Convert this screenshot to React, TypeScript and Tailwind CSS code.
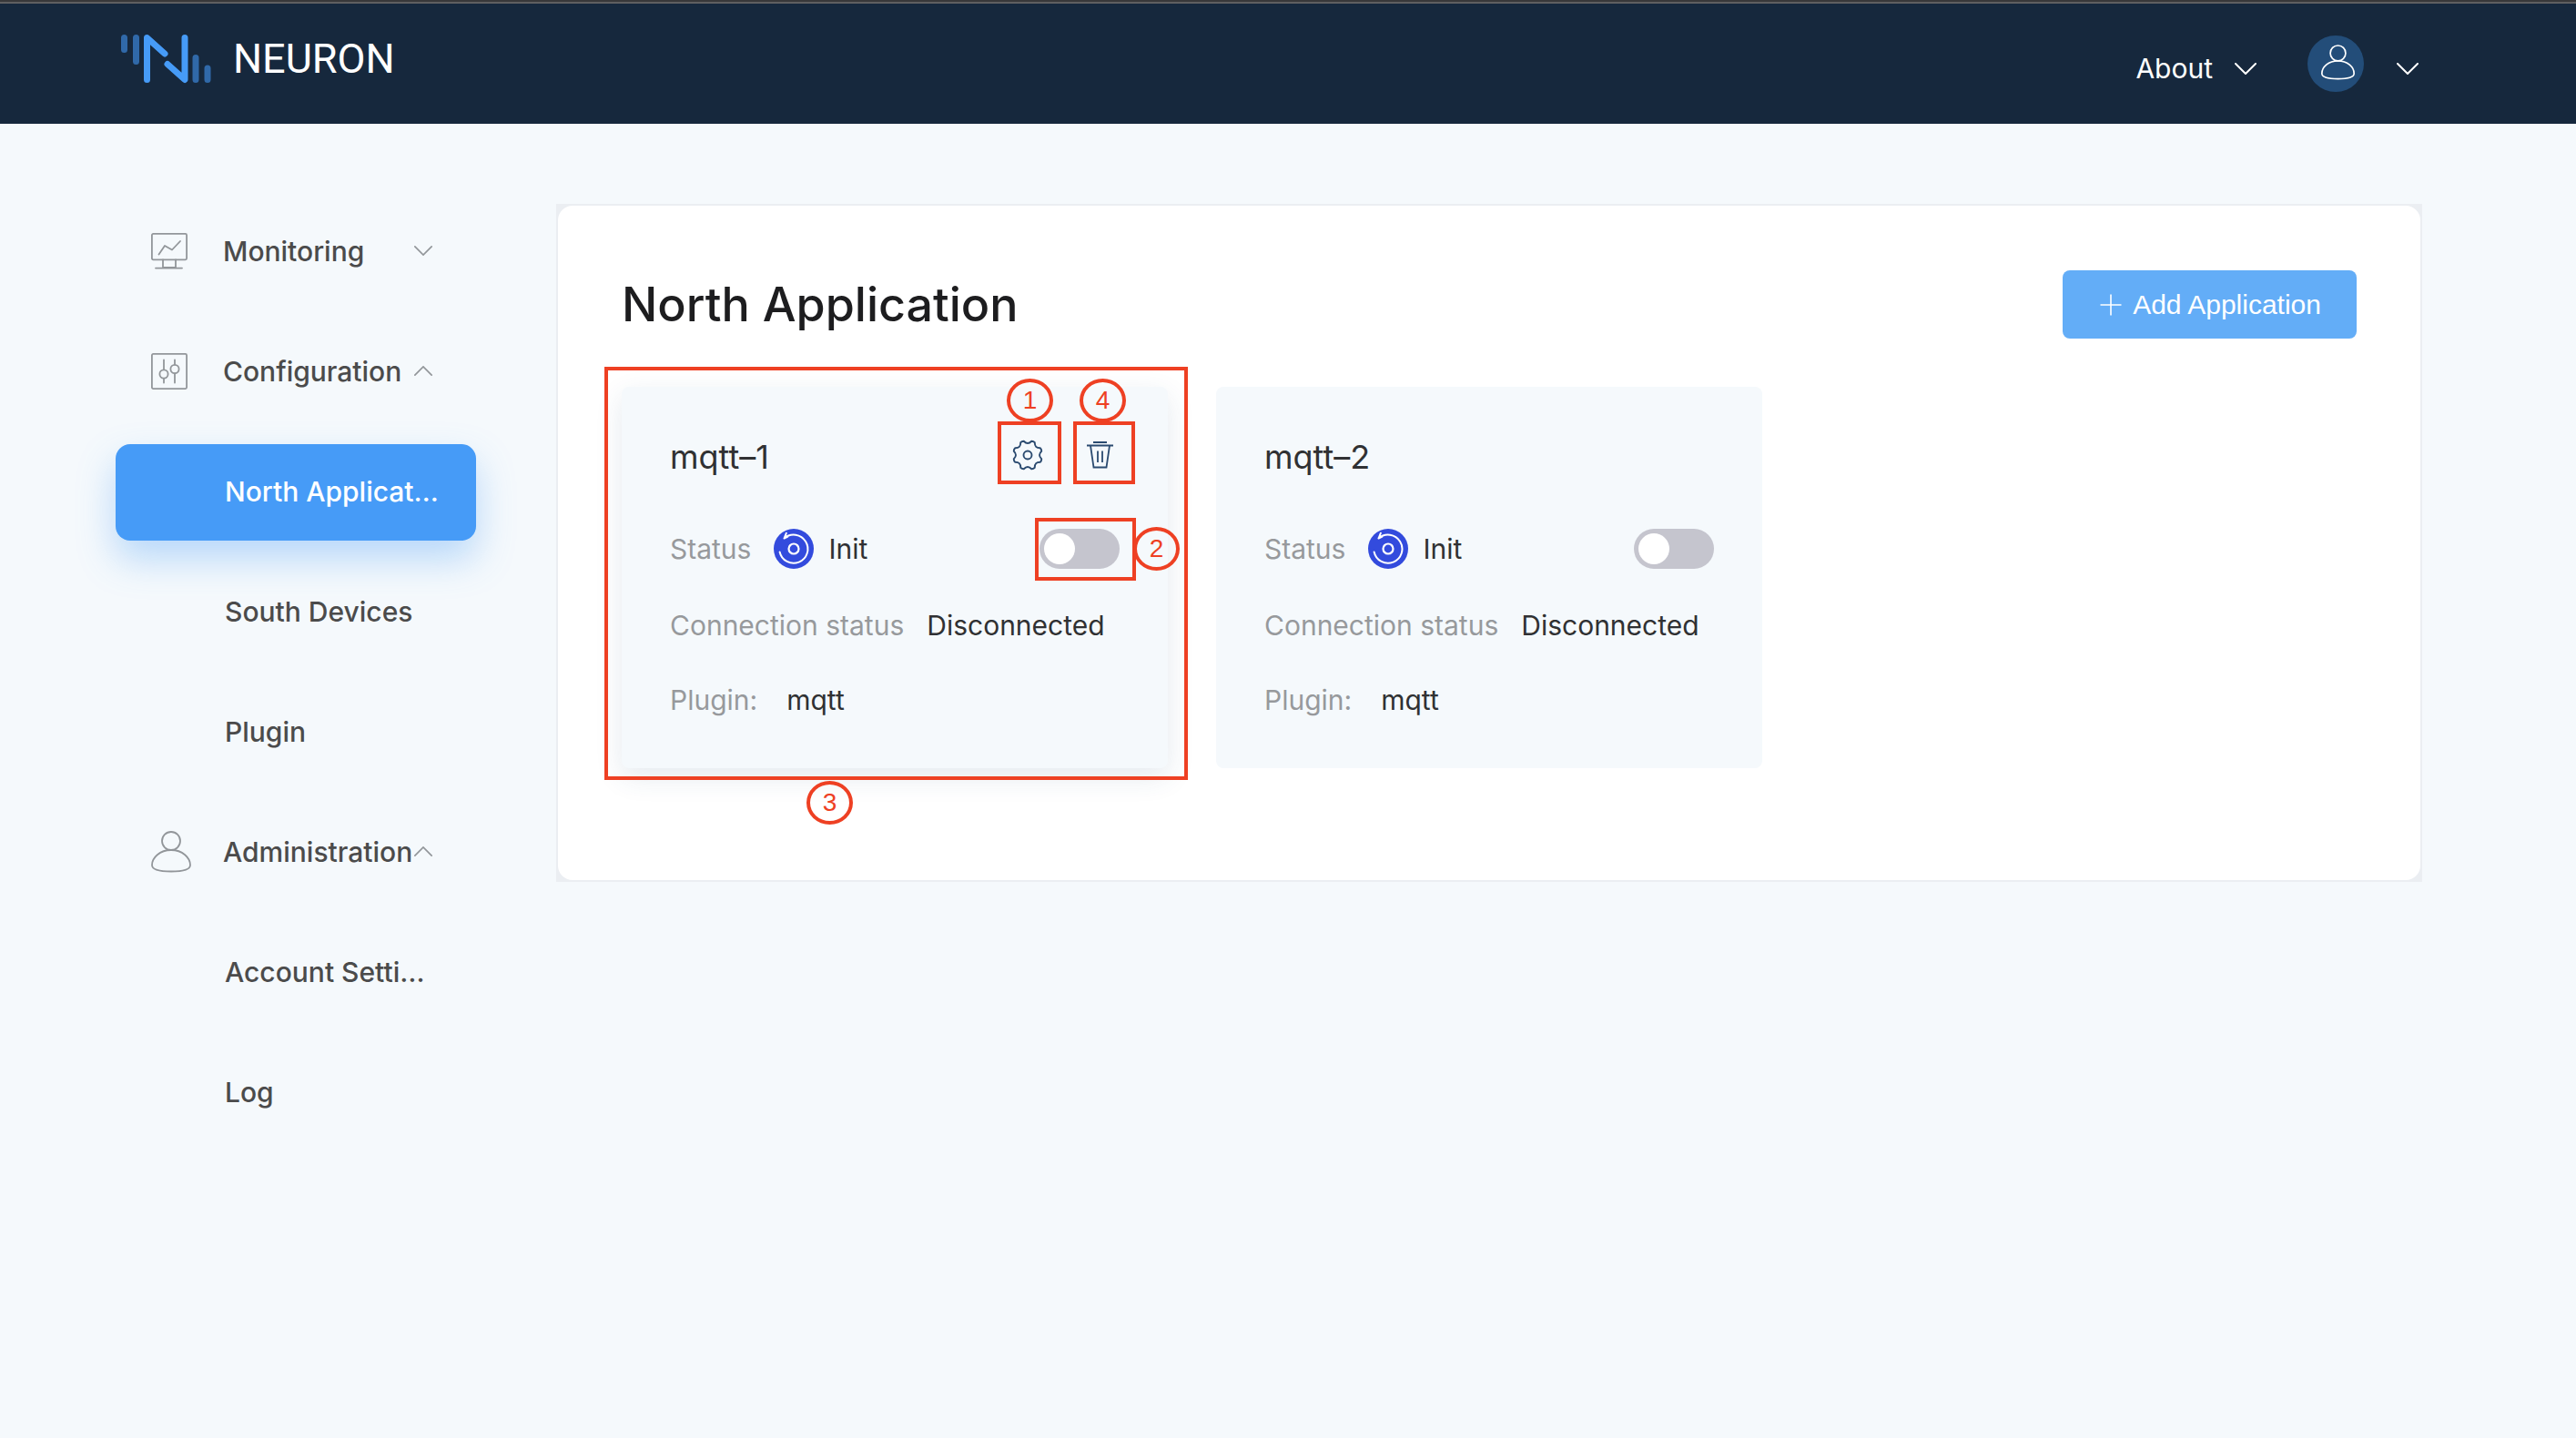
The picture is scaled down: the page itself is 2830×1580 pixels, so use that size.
import type { ReactNode } from "react";

function Logo() {
  return (
    <svg width="99" height="54" viewBox="0 0 99 54" fill="none" strokeWidth="7" strokeLinecap="round" strokeLinejoin="round" aria-hidden="true">
      <path stroke="#3069a9" d="M3.5 3.5V16.5M16.5 3.5V29.5M82 25.5V49.5M95 37V49.5" />
      <path stroke="#469bf7" d="M28.5 49.5V3.5L48 21M51 32.5L70 49.5V3.5" />
    </svg>
  );
}

function Person({ className, stroke }: { className: string; stroke: number }) {
  return (
    <svg className={className} viewBox="0 0 44 46" fill="none" stroke="currentColor" strokeWidth={stroke} aria-hidden="true">
      <circle cx="22" cy="11" r="10" />
      <path d="M22 21C9.5 21 1 29.5 1 37.5C1 42.5 8 44.5 22 44.5C36 44.5 43 42.5 43 37.5C43 29.5 34.5 21 22 21Z" />
    </svg>
  );
}

function Chevron({ className, up = false }: { className: string; up?: boolean }) {
  return (
    <svg className={className} viewBox="0 0 24 13" fill="none" stroke="currentColor" strokeWidth="2" strokeLinecap="round" aria-hidden="true">
      <path d={up ? "M1 12L12 1L23 12" : "M1 1L12 12L23 1"} />
    </svg>
  );
}

function MonitorIcon() {
  return (
    <svg width="40" height="40" viewBox="0 0 40 40" fill="none" stroke="currentColor" strokeWidth="1.8" strokeLinecap="round" strokeLinejoin="round" aria-hidden="true">
      <rect x="0.9" y="0.9" width="38.2" height="28.4" rx="1.5" />
      <path d="M8.5 23.5L15 14L23 18.5L32 9M13 29.3V38H27V29.3M5 38.6H34" />
    </svg>
  );
}

function SlidersIcon() {
  return (
    <svg width="40" height="40" viewBox="0 0 40 40" fill="none" stroke="currentColor" strokeWidth="1.8" strokeLinecap="round" aria-hidden="true">
      <rect x="0.9" y="0.9" width="38.2" height="38.2" rx="1.5" />
      <circle cx="14" cy="23" r="4.6" />
      <circle cx="26" cy="17.5" r="4.6" />
      <path d="M14 7.5V18M14 28V32.5M26 7.5V12.5M26 22.5V32.5" />
    </svg>
  );
}

function gearOutline() {
  const at = (deg: number, r: number) => {
    const a = (deg * Math.PI) / 180;
    return `${(17 + r * Math.cos(a)).toFixed(2)} ${(17 + r * Math.sin(a)).toFixed(2)}`;
  };
  let d = `M${at(15.5, 15.8)}`;
  for (let i = 0; i < 8; i++) {
    const tooth = 22.5 + i * 45;
    d += `Q${at(tooth, 16.6)} ${at(tooth + 7, 15.8)}Q${at(tooth + 22.5, 10.8)} ${at(tooth + 38, 15.8)}`;
  }
  return d + "Z";
}

const GEAR = gearOutline();

function GearIcon() {
  return (
    <svg width="34" height="34" viewBox="0 0 34 34" fill="none" stroke="currentColor" strokeWidth="1.9" strokeLinejoin="round" aria-hidden="true">
      <path d={GEAR} />
      <circle cx="17" cy="17" r="4.5" />
    </svg>
  );
}

function TrashIcon() {
  return (
    <svg width="29" height="30" viewBox="0 0 29 30" fill="none" stroke="currentColor" strokeWidth="1.8" aria-hidden="true">
      <path d="M7 1H22M0 4.5H29M4 4.5L7.5 28.5H21.5L25 4.5M12 10.5V23M17 10.5V23" />
    </svg>
  );
}

function InitIcon() {
  return (
    <svg width="44" height="44" viewBox="0 0 44 44" fill="none" stroke="#fff" strokeWidth="2" strokeLinecap="round" strokeLinejoin="round" aria-hidden="true">
      <circle cx="22" cy="22" r="22" fill="#334bdd" stroke="none" />
      <circle cx="22" cy="22" r="5.5" strokeWidth="2.2" />
      <path d="M13.8 4.8L11.5 10.5A15.6 15.6 0 1 1 6.6 25.5M11.5 10.5L15.5 8.5" />
    </svg>
  );
}

function NavGroup({ icon, label, open }: { icon: ReactNode; label: string; open: boolean }) {
  return (
    <button type="button" aria-expanded={open} className="flex h-[106px] w-full items-center pb-[3px] pl-[39px] text-left text-[#4b4b4b]">
      <span className="w-[79px] shrink-0 text-[#92969a]">{icon}</span>
      <span className="w-[210px] shrink-0 whitespace-nowrap">{label}</span>
      <Chevron up={open} className="h-[11px] w-5 shrink-0 text-[#92969a]" />
    </button>
  );
}

function NavItem({ label, active = false }: { label: string; active?: boolean }) {
  return (
    <a
      href="#"
      aria-current={active ? "page" : undefined}
      className={
        active
          ? "flex h-[106px] items-center rounded-2xl bg-[#469bf7] pb-[3px] pl-[120px] whitespace-nowrap text-white shadow-[0_20px_40px_rgba(70,155,247,0.35)]"
          : "flex h-[106px] items-center pb-[3px] pl-[120px] whitespace-nowrap text-[#4b4b4b]"
      }
    >
      {label}
    </a>
  );
}

function Marker({ className, children }: { className: string; children: ReactNode }) {
  return (
    <span className={`absolute flex items-center justify-center rounded-[50%] border-4 border-[#ee4023] font-['Liberation_Sans',sans-serif] text-[28px] leading-none text-[#ee4023] ${className}`}>
      {children}
    </span>
  );
}

function Callouts() {
  const box = "absolute border-4 border-[#ee4023]";
  return (
    <div className="pointer-events-none absolute inset-0">
      <div className={`${box} -top-[22px] -right-[22px] -bottom-[13px] -left-[19px]`} />
      <div className={`${box} top-[38px] right-[117px] h-[69px] w-[70px]`} />
      <div className={`${box} top-[38px] right-9 h-[69px] w-[68px]`} />
      <div className={`${box} top-36 right-[35px] h-[69px] w-[111px]`} />
      <Marker className="-top-[9px] right-[126px] h-12 w-[51px]">1</Marker>
      <Marker className="-top-[9px] right-[46px] h-12 w-[51px]">4</Marker>
      <Marker className="top-[154px] -right-[13px] h-12 w-[51px]">2</Marker>
      <Marker className="top-[433px] left-[203px] h-12 w-[51px]">3</Marker>
    </div>
  );
}

function AppCard({ name, highlighted = false }: { name: string; highlighted?: boolean }) {
  return (
    <article
      className={
        highlighted
          ? "relative rounded-lg bg-[#f5f9fc] px-[53px] pt-[53px] pb-[55px] shadow-[0_10px_30px_rgba(40,80,120,0.12)]"
          : "relative rounded-lg bg-[#f5f9fc] px-[53px] pt-[53px] pb-[55px]"
      }
    >
      <div className="flex h-12 items-center justify-between">
        <h2 className="text-4xl text-[#303133]">{name}</h2>
        {highlighted && (
          <div className="mr-[7px] mb-1 flex items-center gap-12 text-[#2b4b70]">
            <button type="button" aria-label="Configure">
              <GearIcon />
            </button>
            <button type="button" aria-label="Delete">
              <TrashIcon />
            </button>
          </div>
        )}
      </div>
      <div className="mt-[55px] flex h-11 items-center">
        <span className="text-[#97999c]">Status</span>
        <span className="mr-4 ml-[25px]">
          <InitIcon />
        </span>
        <span className="text-[#303133]">Init</span>
        <input
          type="checkbox"
          role="switch"
          aria-label={`Run ${name}`}
          className="ml-auto h-11 w-[88px] appearance-none rounded-full bg-[#c5c5ce] p-[5px] before:block before:size-[34px] before:rounded-full before:bg-white checked:bg-[#469bf7] checked:before:ml-11"
        />
      </div>
      <div className="mt-[42px] flex h-10 items-center gap-[25px] whitespace-nowrap">
        <span className="text-[#97999c]">Connection status</span>
        <span className="text-[#303133]">Disconnected</span>
      </div>
      <div className="mt-[42px] flex h-10 items-center gap-8">
        <span className="text-[#97999c]">Plugin:</span>
        <span className="text-[#303133]">mqtt</span>
      </div>
      {highlighted && <Callouts />}
    </article>
  );
}

export default function App() {
  return (
    <div className="min-h-screen bg-[#f5f9fc] font-['Inter',sans-serif] text-[30px] leading-10">
      <header className="flex h-[136px] items-start justify-between border-t-2 border-[#38383a] bg-[#16283d] pr-[173px] pl-[133px] text-white shadow-[inset_0_2px_0_#5f5f61]">
        <a href="#" className="mt-9 flex items-center gap-6">
          <Logo />
          <span className="font-['Roboto',sans-serif] text-[45px] leading-[54px]">NEURON</span>
        </a>
        <div className="mt-[37px] flex items-center">
          <button type="button" className="mt-2.5 flex items-center gap-6">
            About
            <Chevron className="h-[13px] w-6" />
          </button>
          <button type="button" aria-label="Account" className="ml-14 flex items-center gap-9">
            <span className="flex size-[62px] items-center justify-center rounded-full bg-[#234d79]">
              <Person className="mb-1 ml-1 h-[39px] w-[37px]" stroke={2} />
            </span>
            <Chevron className="mt-2.5 h-[13px] w-6" />
          </button>
        </div>
      </header>

      <div className="flex items-start gap-[88px] pt-[88px] pr-[169px] pl-[127px]">
        <nav className="flex w-[396px] shrink-0 flex-col gap-[26px] font-medium">
          <NavGroup icon={<MonitorIcon />} label="Monitoring" open={false} />
          <NavGroup icon={<SlidersIcon />} label="Configuration" open />
          <NavItem label="North Applicat…" active />
          <NavItem label="South Devices" />
          <NavItem label="Plugin" />
          <NavGroup icon={<Person className="h-[46px] w-11" stroke={1.8} />} label="Administration" open />
          <NavItem label="Account Setti…" />
          <NavItem label="Log" />
        </nav>

        <main className="min-w-0 flex-1 bg-[#ebeef2] p-0.5">
          <div className="rounded-2xl bg-white px-[70px] pt-[71px] pb-[123px]">
            <div className="flex items-center justify-between">
              <h1 className="text-[52px] leading-[75px] font-medium text-[#1d1d1f]">North Application</h1>
              <button
                type="button"
                className="flex h-[75px] items-center gap-3 rounded-lg bg-[#63adf7] pr-[39px] pl-[41px] font-['Liberation_Sans',sans-serif] text-white"
              >
                <svg width="24" height="24" viewBox="0 0 24 24" stroke="currentColor" strokeWidth="1.6" aria-hidden="true">
                  <path d="M12 0.5V23.5M0.5 12H23.5" />
                </svg>
                Add Application
              </button>
            </div>
            <div className="mt-[53px] grid grid-cols-3 gap-[53px]">
              <AppCard name="mqtt–1" highlighted />
              <AppCard name="mqtt–2" />
            </div>
          </div>
        </main>
      </div>
    </div>
  );
}
